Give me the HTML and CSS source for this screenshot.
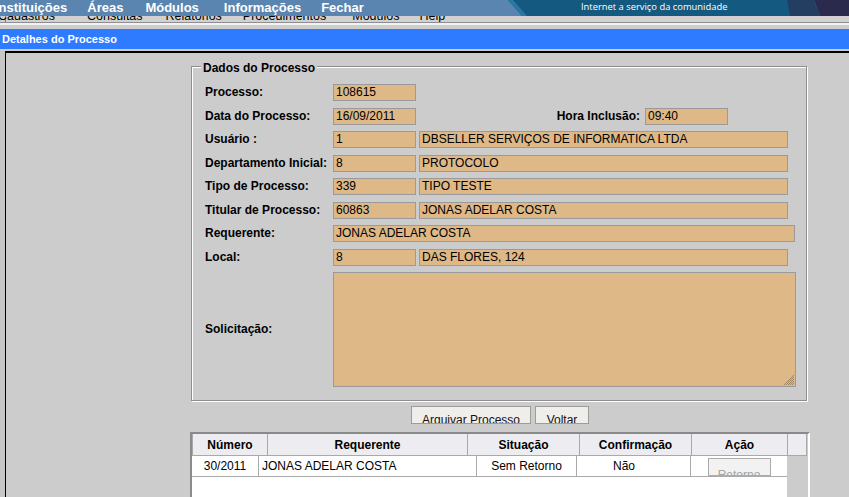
FILE: index.html
```html
<!DOCTYPE html>
<html lang="pt-BR">
<head>
<meta charset="utf-8">
<title>Detalhes do Processo</title>
<link rel="stylesheet" href="styles.css">
</head>
<body>
<header class="topbar">
  <nav class="menu">
    <span class="menu-item">Instituições</span>
    <span class="menu-item">Áreas</span>
    <span class="menu-item">Módulos</span>
    <span class="menu-item">Informações</span>
    <span class="menu-item">Fechar</span>
  </nav>
  <div class="banner">
    <svg class="banner-art" width="345" height="16" viewBox="0 0 345 16" aria-hidden="true">
      <polygon points="4,0 300,0 300,16 18,16" fill="#14597f"/>
      <polygon points="4,0 9,0 23,16 18,16" fill="#2a77a3"/>
      <polygon points="283,0 310,0 316,16 286,16" fill="#233e60"/>
      <polygon points="310,0 345,0 345,16 316,16" fill="#2a2a4c"/>
    </svg>
    <span class="banner-text">Internet a serviço da comunidade</span>
  </div>
</header>
<div class="submenu">
  <span class="submenu-item">Cadastros</span>
  <span class="submenu-item">Consultas</span>
  <span class="submenu-item">Relatórios</span>
  <span class="submenu-item">Procedimentos</span>
  <span class="submenu-item">Módulos</span>
  <span class="submenu-item">Help</span>
</div>
<div class="sep"></div>
<div class="titlebar">Detalhes do Processo</div>
<div class="gap"></div>
<main class="frame">
  <div class="form">
    <section class="fieldset">
      <div class="legend">Dados do Processo</div>
      <div class="rows">
        <div class="row">
          <span class="label">Processo:</span>
          <span class="field field-sm">108615</span>
        </div>
        <div class="row">
          <span class="label">Data do Processo:</span>
          <span class="field field-sm">16/09/2011</span>
          <span class="label label-right">Hora Inclusão:</span>
          <span class="field field-sm">09:40</span>
        </div>
        <div class="row">
          <span class="label">Usuário :</span>
          <span class="field field-sm">1</span>
          <span class="field field-md">DBSELLER SERVIÇOS DE INFORMATICA LTDA</span>
        </div>
        <div class="row">
          <span class="label">Departamento Inicial:</span>
          <span class="field field-sm">8</span>
          <span class="field field-md">PROTOCOLO</span>
        </div>
        <div class="row">
          <span class="label">Tipo de Processo:</span>
          <span class="field field-sm">339</span>
          <span class="field field-md">TIPO TESTE</span>
        </div>
        <div class="row">
          <span class="label">Titular de Processo:</span>
          <span class="field field-sm">60863</span>
          <span class="field field-md">JONAS ADELAR COSTA</span>
        </div>
        <div class="row">
          <span class="label">Requerente:</span>
          <span class="field field-lg">JONAS ADELAR COSTA</span>
        </div>
        <div class="row">
          <span class="label">Local:</span>
          <span class="field field-sm">8</span>
          <span class="field field-md">DAS FLORES, 124</span>
        </div>
        <div class="row row-tall">
          <span class="label">Solicitação:</span>
          <span class="field textarea"></span>
        </div>
      </div>
    </section>
    <div class="actions">
      <span class="btn btn-arquivar">Arquivar Processo</span>
      <span class="btn btn-voltar">Voltar</span>
    </div>
    <div class="grid">
      <div class="grid-head">
        <span class="hcell c-num">Número</span>
        <span class="hcell c-req">Requerente</span>
        <span class="hcell c-sit">Situação</span>
        <span class="hcell c-conf">Confirmação</span>
        <span class="hcell c-acao">Ação</span>
        <span class="hcell c-blank"></span>
      </div>
      <div class="grid-body">
        <div class="rows-area">
          <div class="drow">
            <span class="dcell d-num">30/2011</span>
            <span class="dcell d-req">JONAS ADELAR COSTA</span>
            <span class="dcell d-sit">Sem Retorno</span>
            <span class="dcell d-conf">Não</span>
            <span class="dcell d-acao"><span class="dbtn">Retorno</span></span>
          </div>
        </div>
        <div class="scroll-strip"></div>
      </div>
    </div>
  </div>
</main>
</body>
</html>
```
FILE: styles.css
```css
html, body {
  margin: 0;
  width: 849px;
  height: 497px;
  overflow: hidden;
}
body {
  background: #c6c6c6;
  font-family: "Liberation Sans", Arial, sans-serif;
  color: #000;
}

/* top menu bar */
.topbar {
  position: relative;
  z-index: 1;
  display: flex;
  height: 16px;
  background: #5a85b1;
  overflow: hidden;
}
.menu {
  display: flex;
  flex: 1;
  min-width: 0;
}
.menu-item {
  color: #fff;
  font-weight: bold;
  font-size: 13px;
  line-height: 16px;
  white-space: nowrap;
}
.menu-item:nth-child(1) { margin-left: -5px; }
.menu-item:nth-child(2) { margin-left: 20px; }
.menu-item:nth-child(3) { margin-left: 22px; }
.menu-item:nth-child(4) { margin-left: 25px; }
.menu-item:nth-child(5) { margin-left: 20px; }

.banner {
  position: relative;
  width: 345px;
  flex: none;
}
.banner-art {
  position: absolute;
  left: 0;
  top: 0;
}
.banner-text {
  position: relative;
  display: block;
  padding-left: 77px;
  color: #fff;
  font-family: "Open Sans", "Liberation Sans", sans-serif;
  font-size: 9.4px;
  line-height: 13px;
  white-space: nowrap;
}

/* second menu row, mostly hidden under the top bar */
.submenu {
  display: flex;
  height: 6px;
  overflow: hidden;
  background: linear-gradient(to right, #cfcfcf 5px, #7a7a7a 5px, #7a7a7a 6px, #d1d1d1 6px);
}
.submenu-item {
  font-size: 12.5px;
  line-height: 14px;
  margin-top: -7px;
  white-space: nowrap;
  height: 14px;
}
.submenu-item:nth-child(1) { margin-left: -2px; }
.submenu-item:nth-child(2) { margin-left: 32px; }
.submenu-item:nth-child(3) { margin-left: 23px; }
.submenu-item:nth-child(4) { margin-left: 21px; }
.submenu-item:nth-child(5) { margin-left: 26px; }
.submenu-item:nth-child(6) { margin-left: 20px; }

.sep {
  height: 6px;
  border-top: 1px solid #8f8f8f;
  background: linear-gradient(#f2f2f2 0, #f2f2f2 2px, #cdcdcd 2px);
}

.titlebar {
  height: 20px;
  background: #2e7bff;
  color: #fff;
  font-weight: bold;
  font-size: 11px;
  line-height: 21px;
  padding-left: 2px;
  white-space: nowrap;
}
.gap {
  height: 2px;
  background: #cdcdcd;
}

/* main frame */
.frame {
  display: block;
  margin-left: 5px;
  border-top: 2px solid #000;
  border-left: 1px solid #000;
  background: #cccccc;
  height: 460px;
  overflow: hidden;
}
.form {
  margin-left: 184px;
  width: 620px;
  padding-top: 13px;
}

.fieldset {
  margin-left: 1px;
  width: 616px;
  box-sizing: border-box;
  border: 1px solid #8e8e8e;
  box-shadow: 1px 1px 0 #fff, inset 1px 1px 0 #fff;
  padding: 0 0 13px 13px;
}
.legend {
  width: max-content;
  margin: -6px 0 0 -4px;
  padding: 0 2px;
  background: #cccccc;
  font-weight: bold;
  font-size: 12px;
  line-height: 14px;
}
.rows {
  display: flex;
  flex-direction: column;
  gap: 6.5px;
  margin-top: 9px;
}
.row {
  display: flex;
  align-items: center;
  height: 17px;
}
.row-tall {
  height: 115px;
}
.label {
  width: 128px;
  flex: none;
  font-weight: bold;
  font-size: 12px;
  line-height: 15px;
  white-space: nowrap;
}
.label-right {
  width: 224px;
  margin-right: 5px;
  text-align: right;
}
.field {
  display: block;
  flex: none;
  height: 17px;
  box-sizing: border-box;
  border: 1px solid #9a9a9a;
  background: #deb887;
  font-size: 12px;
  line-height: 15px;
  padding: 0 2px;
  white-space: nowrap;
  overflow: hidden;
}
.field-sm { width: 83px; }
.field-md { width: 369px; margin-left: 3px; }
.field-lg { width: 462px; }
.textarea {
  position: relative;
  width: 463px;
  height: 115px;
}
.textarea::after {
  content: "";
  position: absolute;
  right: 1px;
  bottom: 1px;
  width: 11px;
  height: 11px;
  background: repeating-conic-gradient(#8f7a5c 0 25%, transparent 0 50%) 0 0 / 2px 2px;
  clip-path: polygon(100% 0, 100% 100%, 0 100%);
  opacity: 0.8;
}

/* buttons */
.actions {
  display: flex;
  justify-content: center;
  gap: 4px;
  margin-top: 5px;
}
.btn {
  display: block;
  height: 18px;
  box-sizing: border-box;
  border: 1px solid #9c9c9c;
  background: #efeeeb;
  font-size: 12px;
  line-height: 14px;
  padding-top: 6px;
  overflow: hidden;
  text-align: center;
  white-space: nowrap;
  color: #111;
}
.btn-arquivar { width: 120px; }
.btn-voltar { width: 54px; }

/* results grid */
.grid {
  margin-top: 8px;
  border: 2px solid;
  border-color: #8a8a8a #fff #fff #8a8a8a;
  background: #cccccc;
  height: 90px;
}
.grid-head {
  display: flex;
  width: 615px;
  box-sizing: border-box;
  border-left: 1px solid #a9a9a9;
  border-bottom: 1px solid #a9a9a9;
  background: #ededf1;
}
.hcell {
  display: block;
  height: 21px;
  box-sizing: border-box;
  border-right: 1px solid #a9a9a9;
  text-align: center;
  font-weight: bold;
  font-size: 12px;
  line-height: 23px;
  white-space: nowrap;
}
.c-num { width: 75px; }
.c-req { width: 200px; }
.c-sit { width: 112px; }
.c-conf { width: 112px; }
.c-acao { width: 96px; }
.c-blank { width: 19px; }

.grid-body {
  display: flex;
  height: 70px;
}
.rows-area {
  width: 595px;
  background: #fff;
}
.scroll-strip {
  flex: 1;
}
.drow {
  display: flex;
  height: 21px;
  box-sizing: border-box;
  border-bottom: 1px solid #aaa;
}
.dcell {
  display: block;
  box-sizing: border-box;
  border-right: 1px solid #aaa;
  font-size: 12px;
  line-height: 20px;
  white-space: nowrap;
  overflow: hidden;
  text-align: center;
}
.d-num { width: 67px; }
.d-req { width: 218px; text-align: left; padding-left: 3px; }
.d-sit { width: 100px; }
.d-conf { width: 114px; text-align: left; padding-left: 36px; }
.d-acao { width: 96px; border-right: 0; padding-top: 2px; }
.dbtn {
  display: block;
  width: 63px;
  height: 18px;
  margin: 0 auto;
  box-sizing: border-box;
  border: 1px solid #ababab;
  background: #f2f2f2;
  color: #a3a3a3;
  font-size: 12px;
  line-height: 14px;
  padding-top: 9px;
  overflow: hidden;
  text-align: center;
}
```
